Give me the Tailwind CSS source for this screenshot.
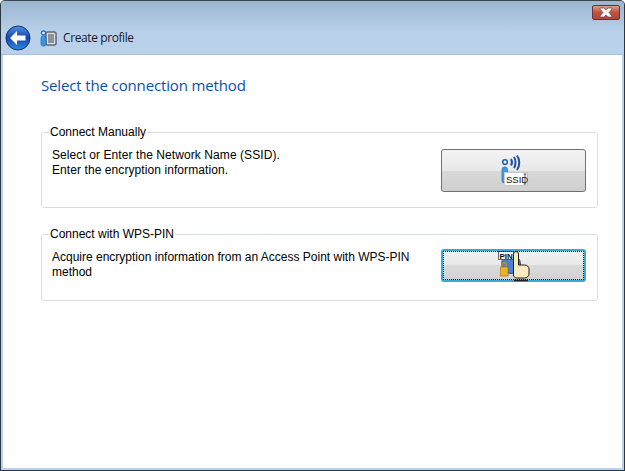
<!DOCTYPE html>
<html lang="en">
<head>
<meta charset="UTF-8">
<title>Create profile</title>
<script src="https://cdn.jsdelivr.net/npm/@tailwindcss/browser@4"></script>
</head>
<body class="bg-white overflow-hidden">
<!-- window frame -->
<div class="w-[625px] h-[471px] flex flex-col bg-[#b9d1ea] border border-[#2b3640] border-t-[#3c4650] rounded-t-[5px] overflow-hidden relative">
  <!-- header -->
  <div class="h-[54px] shrink-0 flex flex-col bg-gradient-to-b from-[#9bb5d0] to-[#b9d1ea] to-60% border-b border-[#a9c0d8]">
    <div class="h-[24px] flex justify-end pr-[4px] pt-[4px]">
      <button class="w-[28px] h-[15px] rounded-[2px] border border-[#6b2f38] bg-gradient-to-b from-[#dc9c8c] via-[#c0503f] to-[#b2443a] flex items-center justify-center">
        <svg width="16" height="11" viewBox="0 0 16 11"><path d="M2 1h4l2 2 2-2h4v1l-3 3.500L14 9v1h-4L8 8l-2 2H2V9l3-3.500L2 2z" fill="#f4f4f4" stroke="#5e3a3a" stroke-width="0.600"/></svg>
      </button>
    </div>
    <div class="flex items-center pl-[4px] h-[25px]">
      <svg width="26" height="26" viewBox="0 0 26 26" class="shrink-0">
        <defs>
          <linearGradient id="backFill" x1="0" y1="0" x2="0" y2="1">
            <stop offset="0" stop-color="#4f8fe0"/><stop offset="0.5" stop-color="#1546b0"/><stop offset="1" stop-color="#2f8be0"/>
          </linearGradient>
        </defs>
        <circle cx="13" cy="13" r="12" fill="url(#backFill)" stroke="#16306e"/>
        <path d="M12 6 5 13l7 7v-4.500h8.500v-5H12z" fill="#fff"/>
      </svg>
      <svg class="ml-[9px] shrink-0" width="17" height="18" viewBox="0 0 17 18">
        <rect x="6" y="3" width="10" height="13" rx="1" fill="#d9dde2" stroke="#2a2f38"/>
        <rect x="8" y="5" width="6" height="9" fill="#8a929c"/>
        <circle cx="3.500" cy="4" r="2" fill="#fff" stroke="#1f6fc8" stroke-width="1.400"/>
        <rect x="1" y="7" width="5" height="10" rx="2" fill="#2f9be8" stroke="#1c5fa8" stroke-width="0.600"/>
      </svg>
      <span class="ml-[6px] text-[12px] leading-none text-[#1a1a2a] font-['Open_Sans',sans-serif] tracking-[-0.4px]">Create profile</span>
    </div>
  </div>
  <!-- content -->
  <div class="flex-1 mx-[2px] mb-[2px] bg-white pl-[38px] pr-[24px] flex flex-col">
    <h1 class="mt-[20px] text-[15px] leading-[20px] font-normal text-[#0a4fb0] font-['Open_Sans',sans-serif] tracking-[-0.14px]">Select the connection method</h1>

    <fieldset class="mt-[30px] h-[83px] border border-[#d5dfe5] rounded-[3px] pl-[10px] pr-[11px] flex font-['Liberation_Sans',sans-serif] text-[12px] text-black">
      <legend class="ml-[-3px] px-[1px] leading-[14px]">Connect Manually</legend>
      <div class="flex justify-between w-full">
        <p class="mt-[9px] leading-[15px] tracking-[0.08px]">Select or Enter the Network Name (SSID).<br>Enter the encryption information.</p>
        <button class="mt-[10px] w-[145px] h-[43px] rounded-[3px] border border-[#707070] bg-[linear-gradient(#f3f3f3,#e8e8e8_50%,#d9d9d9_50%,#cfcfcf)] flex items-center justify-center">
          <svg width="30" height="34" viewBox="0 0 30 34">
            <circle cx="6" cy="8" r="2.300" fill="#fff" stroke="#1f5fc0" stroke-width="1.600"/>
            <rect x="3" y="13" width="5.500" height="16" rx="2.500" fill="#3d9be8" stroke="#1f6fb8" stroke-width="0.700"/>
            <path d="M12 5c1.200 2 1.200 4.500 0 6.500M15 3c2 3 2 8 0 11M18 1.500c3 4 3 10.500 0 14.500" fill="none" stroke="#1f4fa8" stroke-width="2"/>
            <rect x="5.500" y="18.500" width="23" height="13" fill="#fff" stroke="#c8c8c8"/>
            <text x="7" y="28.500" font-size="9.500" font-family="Liberation Sans" fill="#111">SSID</text>
            <path d="M26 20v10M24.500 20h3M24.500 30h3" stroke="#333" stroke-width="0.800"/>
          </svg>
        </button>
      </div>
    </fieldset>

    <fieldset class="mt-[19px] h-[74px] border border-[#d5dfe5] rounded-[3px] pl-[10px] pr-[11px] flex font-['Liberation_Sans',sans-serif] text-[12px] text-black">
      <legend class="ml-[-3px] px-[1px] leading-[14px]">Connect with WPS-PIN</legend>
      <div class="flex justify-between w-full">
        <p class="mt-[9px] w-[380px] leading-[15px]">Acquire encryption information from an Access Point with WPS-PIN method</p>
        <button class="mt-[8px] w-[145px] h-[33px] rounded-[3px] border-2 border-[#3aa9d8] bg-[linear-gradient(#f3f3f3,#e8e8e8_50%,#dadada_50%,#d2d2d2)] flex items-center justify-center outline-1 outline-dotted outline-black outline-offset-[-3px]">
          <svg class="shrink-0" width="34" height="32" viewBox="0 0 34 32">
            <circle cx="14" cy="14" r="9.500" fill="#4a80d8" stroke="#1f4fa8"/>
            <rect x="1.500" y="1.500" width="15" height="8" fill="#f4f4f0" stroke="#333" stroke-width="0.700"/>
            <text x="2.500" y="8.500" font-size="8" font-weight="700" font-family="Liberation Sans" fill="#111">PIN</text>
            <path d="M4.800 17v-2a2.200 2.200 0 0 1 4.400 0v2" fill="none" stroke="#c98a10" stroke-width="1.400"/>
            <rect x="3.500" y="17" width="7.500" height="9" fill="#f0b020" stroke="#a06c10" stroke-width="0.600"/>
            <path d="M16.500 26V4a2.500 2.500 0 0 1 5 0v11h6c3 0 4.500 2 4.500 4v5c0 2-2 4-4.500 4H20c-2 0-2.500-1-3.500-2z" fill="#fbe9c0" stroke="#2a2010"/>
            <path d="M17 30.500h14" stroke="#222" stroke-width="1.500"/>
          </svg>
        </button>
      </div>
    </fieldset>
  </div>
</div>
</body>
</html>
